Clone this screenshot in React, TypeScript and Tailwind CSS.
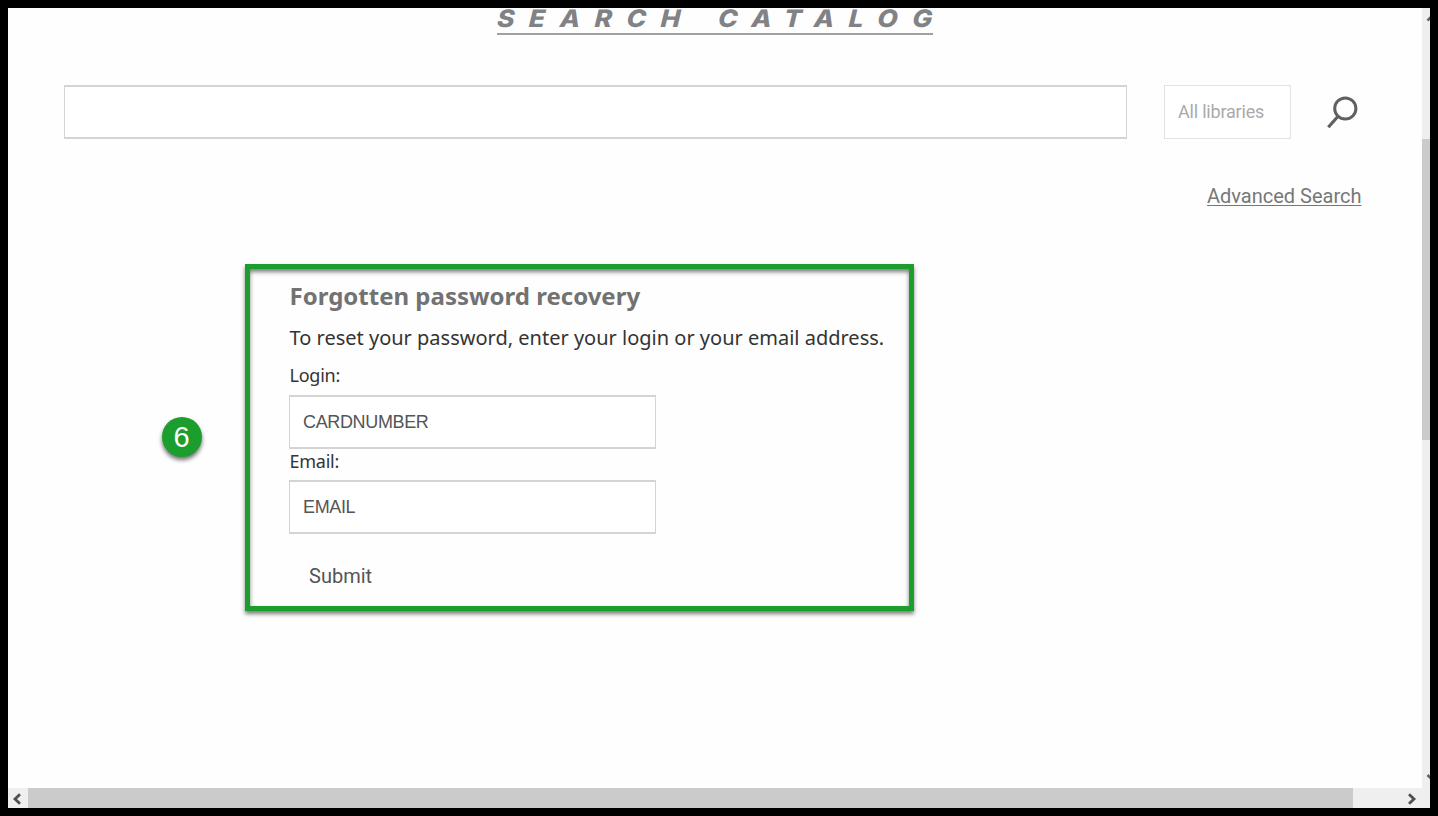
import React from "react";

function Field({ label, value, tight = false }: { label: string; value: string; tight?: boolean }) {
  return (
    <label className="block w-[367px]">
      <span
        className={`block pl-[0.5px] font-['Noto_Sans',sans-serif] text-[18px] leading-[24px] tracking-[-0.25px] text-[#333] ${
          tight ? "h-[31px]" : "h-[32px]"
        }`}
      >
        {label}
      </span>
      <input
        defaultValue={value}
        className="block h-[54px] w-full border-x border-y-2 border-[#d4d4d4] bg-white px-[13px] font-['Liberation_Sans',sans-serif] text-[18px] tracking-[-0.35px] text-[#555] outline-none"
      />
    </label>
  );
}

function Chevron({ d }: { d: string }) {
  return (
    <svg width="10" height="12" viewBox="0 0 10 12" fill="none" stroke="#505050" strokeWidth="2.8">
      <path d={d} />
    </svg>
  );
}

export default function App() {
  return (
    <div className="flex h-[816px] w-[1438px] flex-col overflow-hidden bg-black p-2">
      <div className="flex h-[780px]">
        <main className="w-[1414px] bg-[#fefefe]">
          <header className="ml-[489px] h-[27px] w-[436px] border-b-2 border-[#a0a1a3]">
            <h1 className="h-[25px] origin-left -skew-x-3 scale-x-110 whitespace-nowrap font-['Inter',sans-serif] text-[24px] font-extrabold italic leading-[22px] tracking-[13.2px] text-[#808285] [word-spacing:2.500px]">
              SEARCH CATALOG
            </h1>
          </header>
          <form className="mt-[50px] flex items-center pl-[56px]">
            <input className="h-[54px] w-[1063px] border-x border-y-2 border-[#d4d4d4] bg-white px-3 outline-none" />
            <div className="ml-[37px] flex h-[54px] w-[127px] items-center border border-[#e2e2e2] bg-white pb-[2px] pl-[13px] font-['Roboto',sans-serif] text-[18px] tracking-[-0.2px] text-[#aaa]">
              All libraries
            </div>
            <svg className="ml-[36px]" width="32" height="34" viewBox="0 0 32 34" fill="none" stroke="#606060" strokeWidth="3">
              <circle cx="18.3" cy="13.5" r="10.6" />
              <path d="M11.3 21 1.3 32.300" strokeWidth="3.2" />
            </svg>
          </form>
          <div className="mt-[45px] flex h-[26px] justify-end pr-[60.5px]">
            <a className="font-['Roboto',sans-serif] text-[20px] leading-[25px] text-[#777] underline decoration-1 underline-offset-2">
              Advanced Search
            </a>
          </div>
          <div className="mt-[54px] flex items-start pl-[154px]">
            <div className="mt-[153px] flex h-10 w-10 items-center justify-center rounded-full bg-[#1b9e2d] pr-px pt-px font-['Liberation_Sans',sans-serif] text-[29px] leading-none text-white shadow-[0_3px_4px_rgba(0,0,0,0.55)]">
              6
            </div>
            <section className="ml-[43px] h-[347px] w-[669px] border-[5px] border-[#1b9e2d] pl-[39px] shadow-[0_3px_4px_rgba(0,0,0,0.5),inset_0_3px_4px_rgba(0,0,0,0.5)]">
              <h2 className="mt-[10px] h-[34px] pl-[0.5px] font-['Noto_Sans',sans-serif] text-[24px] font-bold leading-[34px] text-[#727272]">
                Forgotten password recovery
              </h2>
              <p className="mt-[9px] h-[32px] whitespace-nowrap pl-[0.5px] font-['Noto_Sans',sans-serif] text-[20px] leading-[32px] text-[#333]">
                To reset your password, enter your login or your email address.
              </p>
              <div className="mt-[9px] flex flex-col">
                <Field label="Login:" value="CARDNUMBER" />
                <Field label="Email:" value="EMAIL" tight />
              </div>
              <button type="button" className="ml-[20px] mt-[29px] block font-['Roboto',sans-serif] text-[20px] leading-[26px] text-[#555]">
                Submit
              </button>
            </section>
          </div>
        </main>
        <div className="w-2 overflow-hidden bg-[#efefef]">
          <svg className="block" width="8" height="780" viewBox="0 0 8 780" fill="none" stroke="#606060" strokeWidth="2.5">
            <path d="m5.500 12.500 5-5M5.500 767l5 5" />
            <rect y="131" width="8" height="301" fill="#cbcbcb" stroke="none" />
          </svg>
        </div>
      </div>
      <div className="flex h-5 bg-[#efefef]">
        <div className="flex w-5 items-center pl-[4px] pt-px">
          <Chevron d="M8 1.200 3 6l5 4.800" />
        </div>
        <div className="w-[1325px] bg-[#cbcbcb]" />
        <div className="ml-[54px] flex items-center pt-px">
          <Chevron d="M2 1.200 7 6l-5 4.800" />
        </div>
      </div>
    </div>
  );
}
